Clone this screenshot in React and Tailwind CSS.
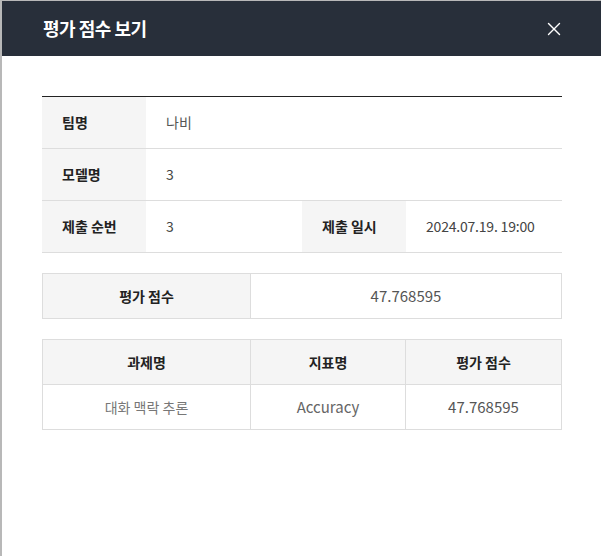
import { X } from 'lucide-react';

// 기본 정보
const INFO = { team: '나비', model: '3', order: '3', submittedAt: '2024.07.19. 19:00' };
const SCORE = '47.768595';
const TASKS = [{ name: '대화 맥락 추론', metric: 'Accuracy', score: '47.768595' }];

const th = 'bg-[#f5f5f5] text-[#222] font-bold text-left pl-5 text-[14px]';
const td = 'text-[#444] pl-5 text-[14px]';

export default function App() {
    return (
        <div
            className="w-[601px] h-[556px] bg-[#b8b8b8] pl-[2px] pt-[1px] overflow-hidden"
            style={{ fontFamily: '"Noto Sans CJK KR", "Noto Sans", sans-serif' }}
        >
            <div className="h-full bg-white flex flex-col">
                {/* Header */}
                <div className="h-[55px] bg-[#282f3a] flex items-center justify-between pl-[41px] pr-[36px] shrink-0">
                    <h2 className="text-white text-[18px] font-bold tracking-[-0.5px]">평가 점수 보기</h2>
                    <X className="text-white" size={22} strokeWidth={1.5} />
                </div>

                <div className="px-[40px] pt-[40px]">
                    {/* 기본 정보 */}
                    <table className="w-[520px] border-collapse border-t border-t-[#222] table-fixed">
                        <colgroup>
                            <col className="w-[104px]" />
                            <col className="w-[156px]" />
                            <col className="w-[104px]" />
                            <col />
                        </colgroup>
                        <tbody>
                            <tr className="h-[52px] border-b border-[#ddd]">
                                <th className={th}>팀명</th>
                                <td className={`${td} text-[#555]`} colSpan={3}>{INFO.team}</td>
                            </tr>
                            <tr className="h-[52px] border-b border-[#ddd]">
                                <th className={th}>모델명</th>
                                <td className={td} colSpan={3}>{INFO.model}</td>
                            </tr>
                            <tr className="h-[52px] border-b border-[#ddd]">
                                <th className={th}>제출 순번</th>
                                <td className={td}>{INFO.order}</td>
                                <th className={th}>제출 일시</th>
                                <td className={`${td} tracking-[-0.2px]`}>{INFO.submittedAt}</td>
                            </tr>
                        </tbody>
                    </table>

                    {/* 평가 점수 */}
                    <table className="w-[520px] mt-[20px] border-collapse table-fixed">
                        <colgroup>
                            <col className="w-[208px]" />
                            <col />
                        </colgroup>
                        <tbody>
                            <tr className="h-[45px]">
                                <th className="border border-[#ddd] bg-[#f5f5f5] text-[#222] font-bold text-[14px]">평가 점수</th>
                                <td className="border border-[#ddd] text-center text-[#555] text-[15px]">{SCORE}</td>
                            </tr>
                        </tbody>
                    </table>

                    {/* 과제별 점수 */}
                    <table className="w-[520px] mt-[20px] border-collapse table-fixed">
                        <colgroup>
                            <col className="w-[208px]" />
                            <col className="w-[155px]" />
                            <col />
                        </colgroup>
                        <thead>
                            <tr className="h-[45px]">
                                <th className="border border-[#ddd] bg-[#f5f5f5] text-[#222] font-bold text-[14px]">과제명</th>
                                <th className="border border-[#ddd] bg-[#f5f5f5] text-[#222] font-bold text-[14px]">지표명</th>
                                <th className="border border-[#ddd] bg-[#f5f5f5] text-[#222] font-bold text-[14px]">평가 점수</th>
                            </tr>
                        </thead>
                        <tbody>
                            {TASKS.map(task => (
                                <tr key={task.name} className="h-[45px]">
                                    <td className="border border-[#ddd] text-center text-[#777] text-[14px]">{task.name}</td>
                                    <td className="border border-[#ddd] text-center text-[#666] text-[15px]">{task.metric}</td>
                                    <td className="border border-[#ddd] text-center text-[#555] text-[15px]">{task.score}</td>
                                </tr>
                            ))}
                        </tbody>
                    </table>
                </div>
            </div>
        </div>
    );
}
